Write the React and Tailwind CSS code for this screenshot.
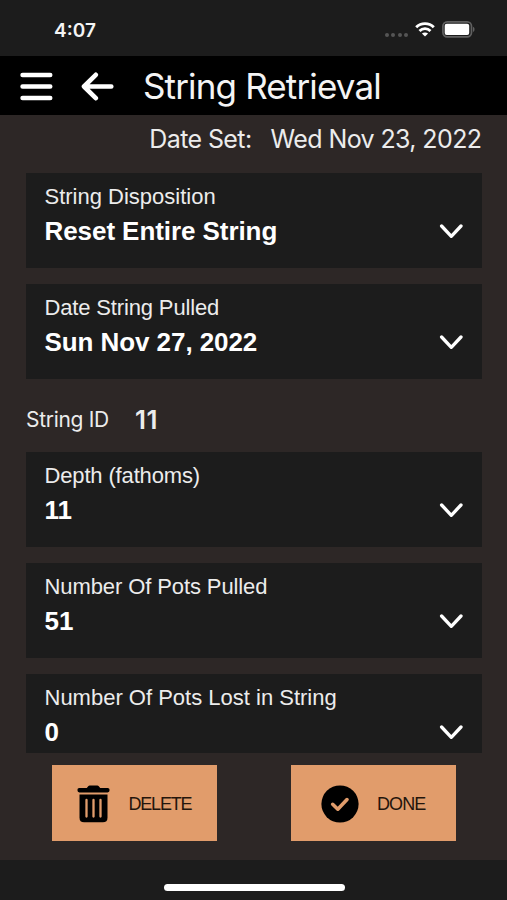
import React from 'react';

const StatusBar = () => (
  <div className="h-[56px] shrink-0 bg-[#1c1c1c] flex items-start justify-between pl-[54px] pr-[32px]">
    <span className="mt-[17px] font-['Inter',sans-serif] font-semibold text-[19px] leading-[28px] text-[#f4f4f4]">4:07</span>
    <div className="mt-[21px] flex items-start">
      <div className="mt-[11.5px] flex gap-[2.5px]">
        {[1, 2, 3, 4].map(i => <span key={i} className="w-[4px] h-[4px] rounded-full bg-[#555555]" />)}
      </div>
      <svg className="ml-[7px] mt-[1px]" width="20" height="15" viewBox="0 0 20 15" fill="none" stroke="white" strokeWidth="2.8">
        <path d="M1.2 5.3C6 .3 14 .3 18.8 5.3" />
        <path d="M4.5 8.9C7.6 5.8 12.4 5.8 15.5 8.9" />
        <path d="M10 14.6L6.9 11.6C8.6 10 11.4 10 13.1 11.6Z" fill="white" stroke="none" />
      </svg>
      <svg className="ml-[7px]" width="33" height="17" viewBox="0 0 33 17" fill="none">
        <rect x="0.9" y="0.9" width="28.6" height="15" rx="4.3" stroke="#606060" strokeWidth="1.7" />
        <rect x="2.7" y="2.8" width="24.5" height="11.2" rx="2" fill="white" />
        <path d="M31 5.8C33 6.6 33 10.2 31 11Z" fill="#606060" />
      </svg>
    </div>
  </div>
);

const MenuIcon = () => (
  <svg width="33" height="29" viewBox="0 0 33 29" fill="none" stroke="white" strokeWidth="4.6" strokeLinecap="round">
    <path d="M2.6 3H30.2M2.6 14.5H30.2M2.6 26H30.2" />
  </svg>
);

const BackIcon = () => (
  <svg width="33" height="29" viewBox="0 0 33 29" fill="none" stroke="white" strokeWidth="4.6" strokeLinecap="round" strokeLinejoin="round">
    <path d="M14.8 2.8L3 14.5L14.8 26.2M3 14.5H30.3" />
  </svg>
);

const TrashIcon = () => (
  <svg width="33" height="38" viewBox="0 0 33 38">
    <path d="M2.4 2.9H9.8L11.2 1.2Q11.8.5 12.7.5H20.3Q21.2.5 21.8 1.2L23.2 2.9H30.6Q32.6 2.9 32.6 5.1T30.6 7.4H2.4Q.4 7.4 .4 5.1T2.4 2.9Z" />
    <path d="M2.5 9.4H30.5V32.7Q30.5 37.3 25.9 37.3H7.1Q2.5 37.3 2.5 32.7Z" />
    <path d="M9.5 15V31.6M16.5 15V31.6M23.5 15V31.6" fill="none" stroke="#e19c6b" strokeWidth="2.3" strokeLinecap="round" />
  </svg>
);

const CheckIcon = () => (
  <svg width="38" height="38" viewBox="0 0 38 38">
    <circle cx="19" cy="19" r="18.6" />
    <path d="M11.7 19.3L16.8 24.2L26 14.6" fill="none" stroke="#e19c6b" strokeWidth="3.6" strokeLinecap="round" strokeLinejoin="round" />
  </svg>
);

const Field = ({ label, value, labelClass = '' }) => (
  <button className="w-full h-[94.5px] shrink-0 bg-[#1c1c1c] px-[18.5px] pt-[11px] flex flex-col justify-start text-left font-['Liberation_Sans',sans-serif]">
    <div className={`text-[22px] leading-[26px] text-[#ececec] ${labelClass}`}>{label}</div>
    <div className="w-full flex items-center justify-between h-[42px]">
      <span className="font-bold text-[26px] leading-[30px] tracking-[-0.07px] text-white">{value}</span>
      <svg width="24" height="15" viewBox="0 0 24 15" fill="none" stroke="white" strokeWidth="3.3" strokeLinecap="round" strokeLinejoin="round">
        <path d="M2.6 2L12.3 12.3L22 2" />
      </svg>
    </div>
  </button>
);

const ActionButton = ({ icon, label, className }) => (
  <button className={`w-[165.5px] h-[76px] bg-[#e19c6b] text-black flex items-center ${className}`}>
    {icon}
    <span className="font-['Liberation_Sans',sans-serif] text-[18px] leading-none text-[#24150c]">{label}</span>
  </button>
);

const App = () => {
  return (
    <div className="w-full h-screen flex flex-col overflow-hidden bg-[#2d2726] text-white">
      <StatusBar />

      <header className="h-[59px] shrink-0 bg-black flex items-center pt-[2px] pl-5">
        <MenuIcon />
        <div className="ml-[28px]"><BackIcon /></div>
        <h1 className="ml-[29px] mb-[2px] font-['Inter',sans-serif] text-[35px] leading-[44px] tracking-[-0.85px] text-[#f4f4f4]">String Retrieval</h1>
      </header>

      <main className="h-[638px] shrink-0 overflow-hidden flex flex-col pl-[26px] pr-[25.5px]">
        <div className="h-[58px] shrink-0 flex justify-end gap-[19px] pt-[9px] font-['Inter',sans-serif] text-[25px] leading-[30px] tracking-[-0.6px] text-[#ececec]">
          <span>Date Set:</span>
          <span>Wed Nov 23, 2022</span>
        </div>
        <div className="flex flex-col gap-[16.5px]">
          <Field label="String Disposition" value="Reset Entire String" />
          <Field label="Date String Pulled" value="Sun Nov 27, 2022" labelClass="tracking-[-0.15px]" />
        </div>
        <div className="h-[73.5px] shrink-0 flex items-center pt-[8px] font-['Inter',sans-serif] text-[#ececec]">
          <span className="text-[21px] tracking-[-0.3px]">String ID</span>
          <span className="ml-[26px] font-semibold text-[26px] tracking-[0.5px]">11</span>
        </div>
        <div className="flex flex-col gap-[16.5px]">
          <Field label="Depth (fathoms)" value="11" labelClass="tracking-[-0.15px]" />
          <Field label="Number Of Pots Pulled" value="51" labelClass="tracking-[-0.1px]" />
          <Field label="Number Of Pots Lost in String" value="0" />
        </div>
      </main>

      <div className="h-[107px] shrink-0 flex gap-[73.5px] pl-[51.5px] pt-[12px]">
        <ActionButton
          className="pl-[25.5px] gap-[18.5px] pt-[1px] tracking-[-1.2px]"
          icon={<TrashIcon />}
          label="DELETE"
        />
        <ActionButton
          className="pl-[30px] gap-[18.5px] pt-[1px] tracking-[-0.9px]"
          icon={<CheckIcon />}
          label="DONE"
        />
      </div>

      {/* Home indicator */}
      <footer className="h-[40px] shrink-0 bg-[#1c1c1c] flex justify-center pt-6 pl-px">
        <div className="w-[181px] h-[7px] rounded-full bg-white" />
      </footer>
    </div>
  );
};

export default App;
